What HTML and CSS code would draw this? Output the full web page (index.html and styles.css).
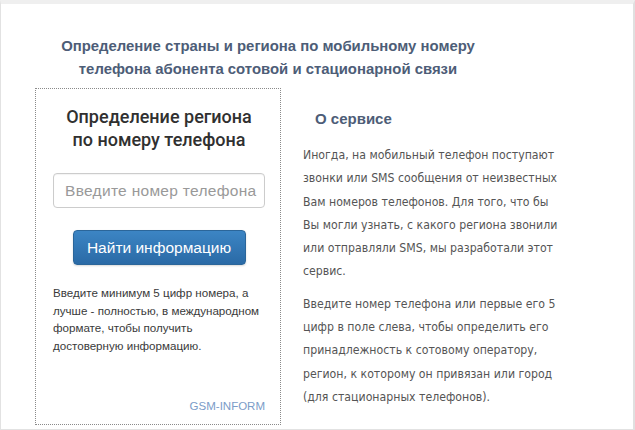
FILE: index.html
```html
<!DOCTYPE html>
<html lang="ru">
<head>
    <meta charset="UTF-8">
    <meta name="viewport" content="width=device-width, initial-scale=1.0">
    <title>Определение региона по номеру телефона</title>
    <link rel="stylesheet" href="styles.css">
</head>
<body>
    <div class="page">
        <h1 class="page-title">Определение страны и региона по мобильному номеру<br>телефона абонента сотовой и стационарной связи</h1>

        <div class="content">
            <div class="search-box">
                <h2>Определение региона<br>по номеру телефона</h2>
                <input type="text" class="phone-input" placeholder="Введите номер телефона">
                <div class="btn-row">
                    <button class="btn-find">Найти информацию</button>
                </div>
                <p class="hint">Введите минимум 5 цифр номера, а лучше - полностью, в международном формате, чтобы получить<br>достоверную информацию.</p>
                <div class="brand">GSM-INFORM</div>
            </div>

            <div class="about">
                <h3>О сервисе</h3>
                <p>Иногда, на мобильный телефон поступают звонки или SMS сообщения от неизвестных Вам номеров телефонов. Для того, что бы Вы могли узнать, с какого региона звонили или отправляли SMS, мы разработали этот сервис.</p>
                <p>Введите номер телефона или первые его 5 цифр в поле слева, чтобы определить его принадлежность к сотовому оператору, регион, к которому он привязан или город (для стационарных телефонов).</p>
            </div>
        </div>
    </div>
</body>
</html>
```

FILE: styles.css
```css
/* Phone lookup page */
body {
    margin: 0;
    padding: 0;
    background-color: #ffffff;
    font-family: "Liberation Sans", Arial, sans-serif;
}

.page {
    box-sizing: border-box;
    height: 430px;
    border: 1px solid #e2e2e2;
    border-right: 2px solid #e0e0e0;
    border-top: 4px solid #efefef;
    padding: 31px 0 0 34px;
    overflow: hidden;
}

.page-title {
    width: 466px;
    margin: 0;
    font-size: 14.9px;
    line-height: 23px;
    font-weight: bold;
    text-align: center;
    color: #4d5d77;
}

.content {
    display: flex;
    gap: 22px;
    margin-top: 7px;
}

.search-box {
    box-sizing: border-box;
    width: 246px;
    height: 337px;
    border: 1px dotted #8a8a8a;
    padding: 0 15px 0 17px;
    display: flex;
    flex-direction: column;
}

.search-box h2 {
    margin: 16px 0 0;
    font-family: Roboto, "Liberation Sans", sans-serif;
    font-size: 18px;
    line-height: 23px;
    font-weight: 500;
    text-align: center;
    color: #303030;
}

.phone-input {
    box-sizing: border-box;
    width: 212px;
    height: 35px;
    margin-top: 22px;
    padding: 0 3px 0 11px;
    border: 1px solid #cccccc;
    border-radius: 4px;
    font-family: inherit;
    font-size: 15.5px;
    letter-spacing: 0.3px;
    color: #555;
    box-shadow: inset 0 1px 1px rgba(0, 0, 0, 0.05);
}

.phone-input::placeholder {
    color: #999;
}

.btn-row {
    display: flex;
    justify-content: center;
    margin-top: 22px;
}

.btn-find {
    width: 173px;
    height: 35px;
    border: 1px solid #2b669a;
    border-radius: 4px;
    background: linear-gradient(#3c85c4, #2a6aa6);
    color: #ffffff;
    font-family: inherit;
    font-size: 15.5px;
    box-shadow: 0 1px 2px rgba(0, 0, 0, 0.15);
}

.hint {
    margin: 19px -6px 0 0;
    font-size: 11.6px;
    line-height: 17.5px;
    color: #3a3a3a;
}

.brand {
    margin-top: auto;
    margin-bottom: 12px;
    text-align: right;
    font-size: 11.5px;
    color: #7b9cc8;
}

.about {
    width: 262px;
}

.about h3 {
    margin: 22px 0 0 12px;
    font-size: 15px;
    font-weight: bold;
    color: #4d5d77;
}

.about p {
    margin: 17px 0 0;
    font-family: "DejaVu Sans Condensed", "DejaVu Sans", sans-serif;
    font-size: 12.2px;
    line-height: 23.3px;
    color: #555;
}

.about p + p {
    margin-top: 9px;
}
```
